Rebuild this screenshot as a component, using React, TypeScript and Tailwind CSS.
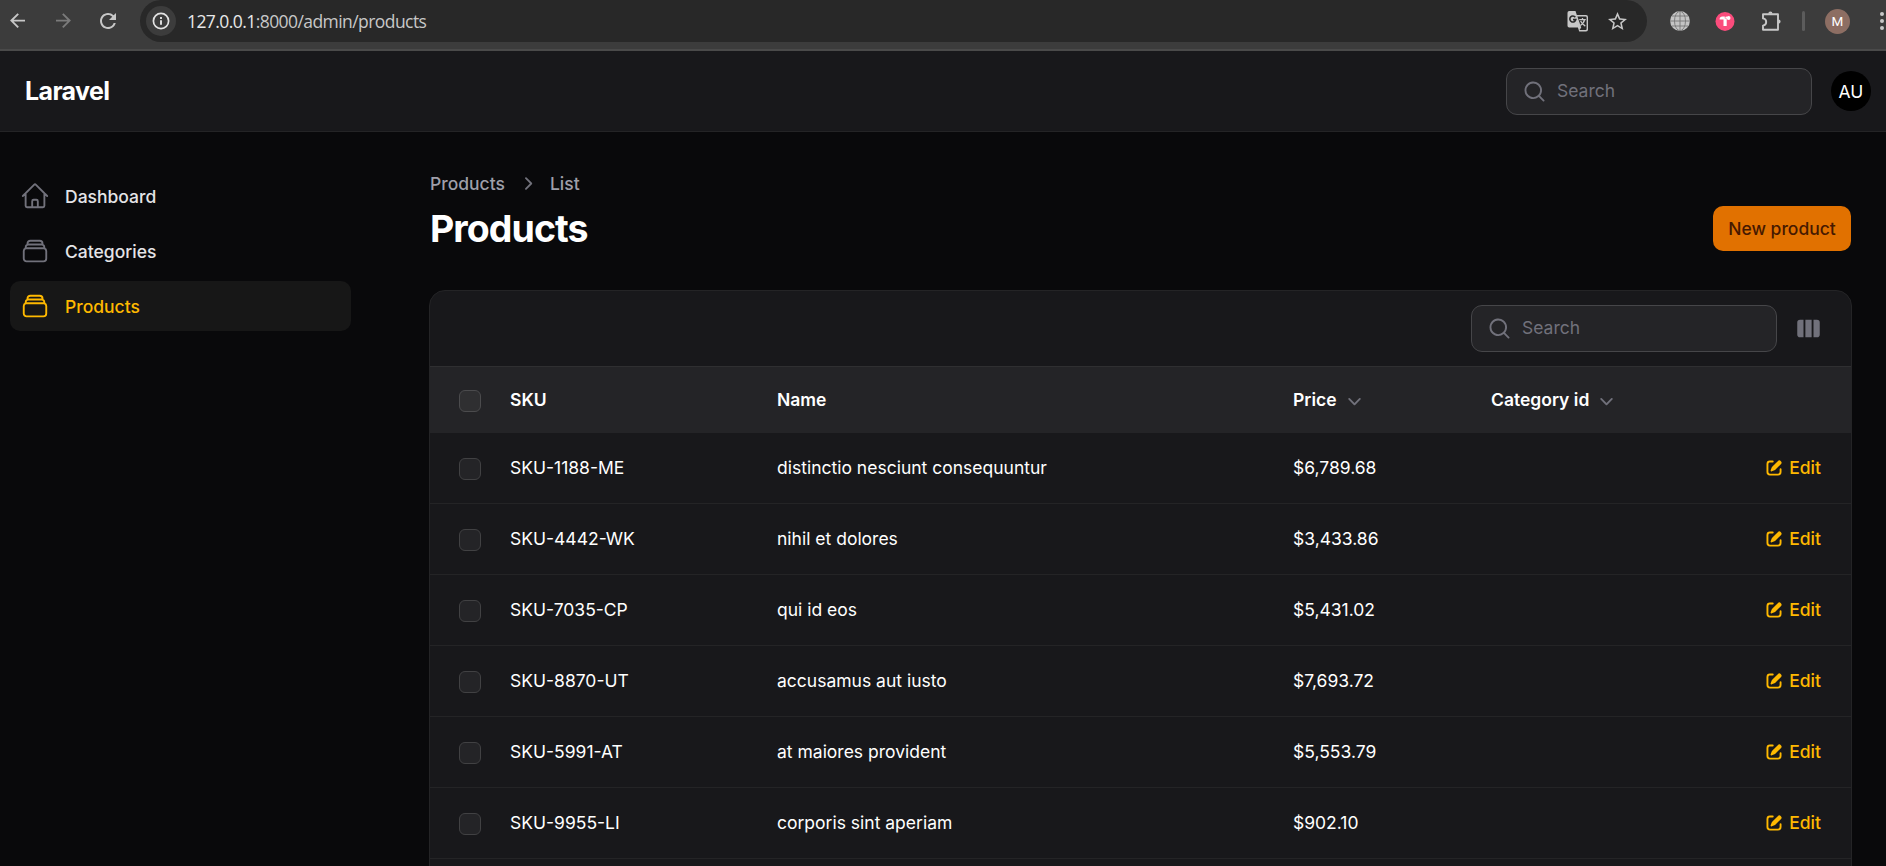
import React from "react";

const rows = [
  ["SKU-1188-ME", "distinctio nesciunt consequuntur", "$6,789.68"],
  ["SKU-4442-WK", "nihil et dolores", "$3,433.86"],
  ["SKU-7035-CP", "qui id eos", "$5,431.02"],
  ["SKU-8870-UT", "accusamus aut iusto", "$7,693.72"],
  ["SKU-5991-AT", "at maiores provident", "$5,553.79"],
  ["SKU-9955-LI", "corporis sint aperiam", "$902.10"],
];

const homePath =
  "m2.25 12 8.954-8.955c.44-.439 1.152-.439 1.591 0L21.75 12M4.5 9.75v10.125c0 .621.504 1.125 1.125 1.125H9.75v-4.875c0-.621.504-1.125 1.125-1.125h2.25c.621 0 1.125.504 1.125 1.125V21h4.125c.621 0 1.125-.504 1.125-1.125V9.75M8.25 21h8.25";
const stackPath =
  "M6 6.878V6a2.25 2.25 0 0 1 2.25-2.25h7.5A2.25 2.25 0 0 1 18 6v.878m-12 0c.235-.083.487-.128.75-.128h10.5c.263 0 .515.045.75.128m-12 0A2.25 2.25 0 0 0 4.5 9v.878m13.5-3A2.25 2.25 0 0 1 19.5 9v.878m0 0a2.246 2.246 0 0 0-.75-.128H5.25c-.263 0-.515.045-.75.128m15 0A2.25 2.25 0 0 1 21 12v6a2.25 2.25 0 0 1-2.25 2.25H5.25A2.25 2.25 0 0 1 3 18v-6c0-.98.626-1.813 1.5-2.122";

function NavItem({ d, label, active }: { d: string; label: string; active?: boolean }) {
  return (
    <a
      className={
        active
          ? "flex h-[50px] items-center gap-[15px] rounded-[10px] bg-[#171717] px-2.5 text-[#ffb900]"
          : "flex h-[50px] items-center gap-[15px] rounded-[10px] px-2.5 text-[#e4e4e7]"
      }
    >
      <svg
        viewBox="0 0 24 24"
        fill="none"
        stroke="currentColor"
        strokeWidth="1.5"
        strokeLinecap="round"
        strokeLinejoin="round"
        className={active ? "size-[30px]" : "size-[30px] text-[#71717b]"}
      >
        <path d={d} />
      </svg>
      <span className="pt-[2px] text-[17.5px] font-medium">{label}</span>
    </a>
  );
}

function SearchBox() {
  return (
    <div className="flex h-[47px] w-[306px] items-center rounded-[11px] border border-[#464649] bg-[#242427] pl-[15px]">
      <svg viewBox="0 0 20 20" fill="#71717b" className="size-[25px]">
        <path
          fillRule="evenodd"
          clipRule="evenodd"
          d="M9 3.5a5.5 5.5 0 1 0 0 11 5.5 5.5 0 0 0 0-11ZM2 9a7 7 0 1 1 12.452 4.391l3.328 3.329a.75.75 0 1 1-1.06 1.06l-3.329-3.328A7 7 0 0 1 2 9Z"
        />
      </svg>
      <span className="pl-[10px] text-[17.5px] text-[#71717b]">Search</span>
    </div>
  );
}

function Checkbox({ header }: { header?: boolean }) {
  return (
    <span
      className={
        header
          ? "mt-[2px] block size-[22px] rounded-[6px] border border-[#4b4b4d] bg-[#2f2f31]"
          : "mt-[2px] block size-[22px] rounded-[6px] border border-[#414143] bg-[#242427]"
      }
    />
  );
}

function SortChevron() {
  return (
    <svg viewBox="0 0 20 20" fill="#71717b" className="size-[25px]">
      <path
        fillRule="evenodd"
        clipRule="evenodd"
        d="M5.22 8.22a.75.75 0 0 1 1.06 0L10 11.94l3.72-3.72a.75.75 0 1 1 1.06 1.06l-4.25 4.25a.75.75 0 0 1-1.06 0L5.22 9.28a.75.75 0 0 1 0-1.06Z"
      />
    </svg>
  );
}

function BrowserBar() {
  return (
    <div className="flex h-[51px] shrink-0 items-start overflow-hidden border-b-2 border-[#4a4a4a] bg-[#3c3c3c]">
      <div className="flex h-[42px] w-[140px] shrink-0 items-center">
        <svg viewBox="0 0 16 16" className="ml-[10px] size-4" fill="none" stroke="#c7c7c7" strokeWidth="1.9">
          <path d="M15 7.6H1.8M8.2 .8 1.4 7.6l6.8 6.8" />
        </svg>
        <svg viewBox="0 0 16 16" className="ml-[29px] size-4" fill="none" stroke="#7b7b7b" strokeWidth="1.9">
          <path d="M1 7.6h13.2M7.8 .8 14.6 7.600l-6.800 6.800" />
        </svg>
        <svg viewBox="4 4 16 16" className="ml-[29px] size-4" fill="#c7c7c7">
          <path d="M17.650 6.350A7.958 7.958 0 0 0 12 4c-4.420 0-7.990 3.580-7.990 8s3.570 8 7.990 8c3.730 0 6.840-2.550 7.730-6h-2.080A5.990 5.990 0 0 1 12 18c-3.310 0-6-2.690-6-6s2.690-6 6-6c1.660 0 3.140.69 4.220 1.780L13 11h7V4z" />
        </svg>
      </div>
      <div className="flex h-[42px] w-[1507px] shrink-0 items-center rounded-full bg-[#282828] pl-[6px]">
        <span className="flex size-[30px] items-center justify-center rounded-full bg-[#3c3c3c]">
          <svg viewBox="0 0 18 18" className="size-[18px]" fill="none" stroke="#e3e3e3" strokeWidth="1.7">
            <circle cx="9" cy="9" r="7.6" />
            <path d="M9 8.2v4.6M9 5v1.9" strokeWidth="1.9" />
          </svg>
        </span>
        <span className="ml-[11px] pt-px font-['Open_Sans',sans-serif] text-[17.5px] tracking-[-0.57px] text-[#c7c7c7]">
          <span className="text-[#e8e8e8]">127.0.0.1</span>:8000/admin/products
        </span>
        <svg viewBox="0 0 22 22" className="mr-[19px] ml-auto size-[22px]">
          <path d="M2.200 1h6.300l1.300 4H19a2 2 0 0 1 2 2v12.500a2 2 0 0 1-2 2h-6.800L10.900 17.500H2.200A1.700 1.700 0 0 1 .5 15.800V2.700A1.700 1.700 0 0 1 2.200 1Z" fill="#c7c7c7" />
          <path d="M10.400 6.500h8.200a1 1 0 0 1 1 1V19a1 1 0 0 1-1 1h-6.100l1.700-2.500Z" fill="#282828" />
          <path d="M8.300 7.300A3 3 0 1 0 8.800 9.600H6" fill="none" stroke="#282828" strokeWidth="1.600" />
          <path d="M12.200 9.600h6.600M15.500 8v1.600M17.500 9.600c-.4 2.600-2 4.600-4.200 5.900M13.600 11.100c.8 1.900 2.200 3.500 4.700 5" fill="none" stroke="#c7c7c7" strokeWidth="1.300" />
        </svg>
        <svg viewBox="2 2 20 20" className="mr-[20px] size-[19px]" fill="#c7c7c7">
          <path d="M22 9.240l-7.190-.62L12 2 9.190 8.630 2 9.240l5.460 4.730L5.820 21 12 17.270 18.180 21l-1.630-7.030L22 9.240zM12 15.400l-3.760 2.270 1-4.280-3.320-2.880 4.380-.38L12 6.100l1.710 4.040 4.380.38-3.320 2.880 1 4.280L12 15.400z" />
        </svg>
      </div>
      <div className="flex h-[42px] shrink-0 items-center">
        <svg viewBox="0 0 20 20" className="ml-[23px] size-5">
          <circle cx="10" cy="10" r="9.900" fill="#c4c4c4" />
          <path d="M10 0v20M0 10h20M2 5h16M2 15h16" fill="none" stroke="#777" strokeWidth=".9" />
          <ellipse cx="10" cy="10" rx="5.500" ry="9.700" fill="none" stroke="#777" strokeWidth=".9" />
        </svg>
        <svg viewBox="0 0 20 20" className="ml-[25px] size-5">
          <circle cx="10" cy="10.400" r="9.500" fill="#fb4c7c" />
          <path d="M4.600 8c0-1.600 1.200-2.500 2.700-2.500h2.500v3H4.600ZM8.500 7.500h3.200v7.400H8.500Z" fill="#fff" />
          <circle cx="13.600" cy="7" r="1.900" fill="#fff" />
          <circle cx="11.300" cy="6.500" r="1" fill="#fff" />
        </svg>
        <svg viewBox="0 0 22 22" className="ml-[25px] size-[22px]" fill="none" stroke="#c7c7c7" strokeWidth="1.900" strokeLinejoin="round">
          <path d="M3 4.200h15v15.600H3v-4.200c1.900-.3 3.200-1.700 3.200-3.600S4.900 8.700 3 8.400Z" />
          <path d="M8.300 3.700a2.100 2.100 0 0 1 4.200 0ZM18.500 9.500a2.100 2.100 0 0 1 0 4.200Z" fill="#c7c7c7" stroke="none" />
        </svg>
        <span className="ml-[20px] h-5 w-[3px] rounded-full bg-[#5c5c5c]" />
        <span className="ml-[20px] flex size-[25px] items-center justify-center rounded-full bg-[#8d6e63] font-['Roboto',sans-serif] text-[13.5px] text-white">
          M
        </span>
        <svg viewBox="0 0 6 20" className="ml-[29px] h-5 w-[6px]" fill="#c7c7c7">
          <circle cx="3" cy="3" r="2" />
          <circle cx="3" cy="10" r="2" />
          <circle cx="3" cy="17" r="2" />
        </svg>
      </div>
    </div>
  );
}

const grid = "grid grid-cols-[80px_267px_516px_198px_1fr] items-center";

export default function App() {
  return (
    <div className="flex h-[866px] w-[1886px] flex-col overflow-hidden bg-[#09090b] font-['Inter',sans-serif] text-white">
      <BrowserBar />
      <header className="flex h-[81px] shrink-0 items-center justify-between border-b border-[#242426] bg-[#18181b] pr-[15px] pl-[25px]">
        <span className="pt-[2px] text-[25px] font-bold tracking-[-0.625px]">Laravel</span>
        <div className="flex items-center gap-[19px]">
          <SearchBox />
          <span className="flex size-[40px] items-center justify-center rounded-full bg-black pt-[2px] text-[17.5px]">AU</span>
        </div>
      </header>
      <div className="flex min-h-0 flex-1">
        <nav className="flex w-[361px] shrink-0 flex-col gap-[5px] px-2.5 pt-[39px]">
          <NavItem d={homePath} label="Dashboard" />
          <NavItem d={stackPath} label="Categories" />
          <NavItem d={stackPath} label="Products" active />
        </nav>
        <main className="flex min-w-0 flex-1 flex-col pr-[34px] pl-[68px]">
          <div className="flex items-center justify-between pt-[39px] pr-[1px] pl-[1px]">
            <div>
              <div className="flex h-[25px] items-center text-[17.5px] font-medium text-[#9f9fa9]">
                <span className="pt-[2px]">Products</span>
                <svg viewBox="0 0 20 20" fill="#71717b" className="mx-[10px] size-[25px]">
                  <path
                    fillRule="evenodd"
                    clipRule="evenodd"
                    d="M8.220 5.220a.75.75 0 0 1 1.060 0l4.250 4.250a.75.75 0 0 1 0 1.060l-4.250 4.250a.75.75 0 0 1-1.060-1.060L11.940 10 8.220 6.280a.75.75 0 0 1 0-1.060Z"
                  />
                </svg>
                <span className="pt-[2px]">List</span>
              </div>
              <h1 className="mt-[10px] text-[37.5px] leading-[45px] font-bold tracking-[-0.9375px]">Products</h1>
            </div>
            <button className="h-[45px] w-[138px] self-end rounded-[10px] bg-[#e17100] pt-[2px] text-[17.5px] font-medium text-[#461901]">
              New product
            </button>
          </div>
          <section className="mt-[39px] h-[640px] shrink-0 overflow-hidden rounded-t-[16px] border border-[#242426] bg-[#18181b]">
            <div className="flex h-[76px] items-center justify-end border-b border-[#2f2f31] pr-[30px]">
              <SearchBox />
              <svg viewBox="0 0 20 20" fill="#71717b" className="ml-[19px] size-[25px]">
                <path d="M14 17h2.750A2.250 2.250 0 0 0 19 14.750v-9.500A2.250 2.250 0 0 0 16.750 3H14v14ZM12.500 3h-5v14h5V3ZM3.250 3H6v14H3.250A2.250 2.250 0 0 1 1 14.750v-9.500A2.250 2.250 0 0 1 3.250 3Z" />
              </svg>
            </div>
            <div className={`${grid} h-[66px] bg-[#242427] text-[17.5px] font-semibold`}>
              <span className="pl-[29px]"><Checkbox header /></span>
              <span>SKU</span>
              <span>Name</span>
              <span className="flex items-center gap-[5px]">Price <SortChevron /></span>
              <span className="flex items-center gap-[5px]">Category id <SortChevron /></span>
            </div>
            {rows.map(([sku, name, price]) => (
              <div key={sku} className={`${grid} h-[71px] border-b border-[#242426] text-[17.5px]`}>
                <span className="pl-[29px]"><Checkbox /></span>
                <span>{sku}</span>
                <span>{name}</span>
                <span>{price}</span>
                <span className="flex items-center justify-end gap-[5px] pr-[30px] font-medium text-[#ffb900]">
                  <svg viewBox="0 0 16 16" fill="currentColor" className="size-5">
                    <path d="M13.488 2.513a1.750 1.750 0 0 0-2.475 0L6.750 6.774a2.750 2.750 0 0 0-.596.892l-.848 2.047a.75.75 0 0 0 .98.980l2.047-.848a2.750 2.750 0 0 0 .892-.596l4.261-4.262a1.750 1.750 0 0 0 0-2.474Z" />
                    <path d="M4.750 3.500c-.69 0-1.250.56-1.250 1.250v6.500c0 .69.56 1.250 1.250 1.250h6.500c.69 0 1.250-.56 1.250-1.250V9A.75.75 0 0 1 14 9v2.250A2.750 2.750 0 0 1 11.250 14h-6.500A2.750 2.750 0 0 1 2 11.250v-6.500A2.750 2.750 0 0 1 4.750 2H7a.75.75 0 0 1 0 1.500H4.750Z" />
                  </svg>
                  Edit
                </span>
              </div>
            ))}
          </section>
        </main>
      </div>
    </div>
  );
}
